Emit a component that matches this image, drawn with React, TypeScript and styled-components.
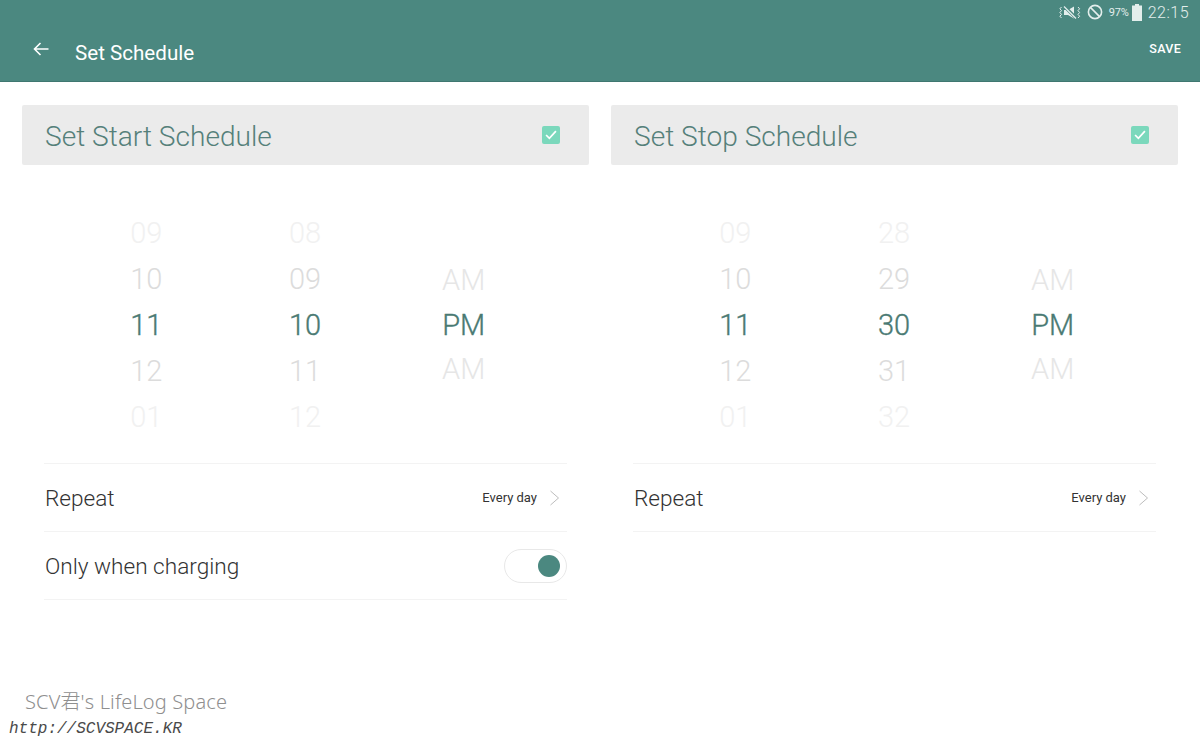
import React from "react"
import styled, { createGlobalStyle } from "styled-components"

const GlobalStyle = createGlobalStyle`
	html, body {
		margin: 0;
		padding: 0;
		background: #fff;
		font-family: Roboto, "Liberation Sans", sans-serif;
	}
`

const SPage = styled.div`
	position: relative;
	width: 1200px;
	height: 750px;
	overflow: hidden;
	background: #fff;
`

const SHeader = styled.header`
	display: flex;
	flex-direction: column;
	height: 81px;
	background: #4b8880;
	border-bottom: 1px solid #3f7770;
	box-sizing: content-box;
`

const SStatusBar = styled.div`
	display: flex;
	align-items: center;
	justify-content: flex-end;
	height: 24px;
	padding-right: 11px;
	color: #e3eeec;
`

const SBattery = styled.span`
	font-size: 11px;
	margin: 0 3px 0 6px;
	letter-spacing: -0.2px;
`

const SClock = styled.span`
	font-size: 16px;
	font-weight: 300;
	letter-spacing: 0.5px;
	margin-left: 6px;
`

const SAppBar = styled.div`
	display: flex;
	align-items: center;
	justify-content: space-between;
	height: 49px;
	padding: 0 19px 0 33px;
	color: #fff;
`

const STitleGroup = styled.div`
	display: flex;
	align-items: center;
	gap: 26px;
`

const STitle = styled.div`
	font-size: 20.6px;
	padding-top: 9px;
`

const SSave = styled.div`
	font-size: 12.5px;
	font-weight: 500;
	letter-spacing: 0.3px;
`

const SBackIcon = styled.svg`
	width: 16px;
	height: 16px;
	display: block;
`

const SColumns = styled.div`
	display: flex;
	gap: 22px;
	padding: 23px 22px 0;
`

const SPanel = styled.section`
	width: 567px;
`

const SPanelHead = styled.div`
	display: flex;
	align-items: center;
	justify-content: space-between;
	height: 60px;
	padding: 0 29px 0 23px;
	background: #ebebeb;
	border-radius: 2px;
`

const SPanelTitle = styled.div`
	font-size: 28.1px;
	font-weight: 300;
	color: #55807a;
	padding-top: 2px;
`

const SCheck = styled.div`
	display: flex;
	align-items: center;
	justify-content: center;
	width: 18px;
	height: 18px;
	background: #7bd8bc;
	border-radius: 2px;
`

const SPicker = styled.div`
	display: flex;
	padding: 45px 0 0 45px;
	height: 298px;
	box-sizing: border-box;
`

const SWheel = styled.div`
	display: flex;
	flex-direction: column;
	align-items: center;
	justify-content: center;
	width: 158.7px;
	height: 230px;
`

const SNumber = styled.div<{ $tone: number }>`
	height: ${(p) => (p.$tone === 3 ? 44.5 : 46)}px;
	line-height: ${(p) => (p.$tone === 3 ? 44.5 : 46)}px;
	font-size: 29px;
	color: ${(p) => (p.$tone === 0 ? "#4a7a73" : p.$tone === 1 ? "#dcdcdc" : p.$tone === 3 ? "#e6e6e6" : "#f1f1f1")};
	font-weight: 300;
	-webkit-text-stroke: ${(p) => (p.$tone === 0 ? "0.35px" : "0")};
`

const SAmPmActive = styled(SNumber)`
	height: 44.5px;
	line-height: 44.5px;
`

const SRow = styled.div`
	display: flex;
	align-items: center;
	justify-content: space-between;
	height: 67px;
	margin: 0 22px;
	border-top: 1px solid #f3f3f3;
	&:last-child {
		border-bottom: 1px solid #f3f3f3;
	}
`

const SRowLabel = styled.div`
	font-size: 22.6px;
	font-weight: 300;
	color: #333;
	padding: 1px 0 0 1px;
`

const SRowValue = styled.div`
	display: flex;
	align-items: center;
	gap: 12px;
	padding-right: 7px;
	font-size: 13px;
	color: #333;
`

const SToggle = styled.div`
	display: flex;
	align-items: center;
	justify-content: flex-end;
	width: 63px;
	height: 34px;
	padding-right: 6px;
	box-sizing: border-box;
	border: 1px solid #e8e8e8;
	border-radius: 17px;
`

const SKnob = styled.div`
	width: 22px;
	height: 22px;
	border-radius: 50%;
	background: #4b8880;
`

const SWatermark = styled.div`
	position: absolute;
	left: 25px;
	top: 686px;
	font-family: "Noto Sans", "Noto Sans CJK KR", sans-serif;
	font-size: 20px;
	font-weight: 300;
	letter-spacing: 0.15px;
	color: #8f8f8f;
`

const SWatermarkUrl = styled.div`
	position: absolute;
	left: 9px;
	top: 720px;
	font-family: "Liberation Mono", monospace;
	font-style: italic;
	font-size: 16px;
	color: #4a4a4a;
`

const Wheel = ({ items }: { items: string[] }) => (
	<SWheel>
		{items.map((t, i) => (
			<SNumber key={t + i} $tone={i === 2 ? 0 : Math.abs(i - 2) === 1 ? 1 : 2}>
				{t}
			</SNumber>
		))}
	</SWheel>
)

const AmPm = () => (
	<SWheel>
		<SNumber $tone={3}>AM</SNumber>
		<SAmPmActive $tone={0}>PM</SAmPmActive>
		<SNumber $tone={3}>AM</SNumber>
	</SWheel>
)

const Chevron = () => (
	<svg width="11" height="16" viewBox="0 0 11 16" fill="none" stroke="#bdbdbd" strokeWidth="1">
		<path d="M1.5 1 L9.5 8 L1.5 15" />
	</svg>
)

const MuteIcon = () => (
	<svg width="22" height="13" viewBox="0 0 22 13" fill="none" stroke="#e3eeec" strokeWidth="1">
		<path d="M5 4 h4 l6 -3.5 v12 l-6 -3.5 h-4 z" fill="#e3eeec" stroke="none" />
		<path d="M5 0 L17.5 12.5" stroke="#4b8880" strokeWidth="3.2" />
		<path d="M5 0.5 L17 12.5" strokeWidth="1.3" />
		<path d="M2.5 1 l-1.6 1.8 l1.6 1.8 l-1.6 1.9 l1.6 1.9 l-1.6 1.8 l1.6 1.8" />
		<path d="M19 1 l1.6 1.8 l-1.6 1.8 l1.6 1.9 l-1.6 1.9 l1.6 1.8 l-1.6 1.8" />
	</svg>
)

const BlockIcon = () => (
	<svg width="16" height="16" viewBox="0 0 16 16" fill="none" stroke="#e3eeec" strokeWidth="1.6" style={{ marginLeft: 6 }}>
		<circle cx="8" cy="8" r="6.6" />
		<path d="M3.4 3.4 L12.6 12.6" />
	</svg>
)

const BatteryIcon = () => (
	<svg width="10" height="17" viewBox="0 0 10 17">
		<path d="M3 0 h4 v1.5 h3 V17 H0 V1.5 h3 z" fill="#e3eeec" />
	</svg>
)

const SchedulePanel = ({
	title,
	minutes,
	charging,
}: {
	title: string
	minutes: string[]
	charging?: boolean
}) => (
	<SPanel>
		<SPanelHead>
			<SPanelTitle>{title}</SPanelTitle>
			<SCheck>
				<svg width="12" height="10" viewBox="0 0 11 9" fill="none" stroke="#fff" strokeWidth="1.6">
					<path d="M1 4.5 L4 7.5 L10 1" />
				</svg>
			</SCheck>
		</SPanelHead>
		<SPicker>
			<Wheel items={["09", "10", "11", "12", "01"]} />
			<Wheel items={minutes} />
			<AmPm />
		</SPicker>
		<SRow>
			<SRowLabel>Repeat</SRowLabel>
			<SRowValue>
				Every day
				<Chevron />
			</SRowValue>
		</SRow>
		{charging && (
			<SRow>
				<SRowLabel>Only when charging</SRowLabel>
				<SToggle>
					<SKnob />
				</SToggle>
			</SRow>
		)}
	</SPanel>
)

export default function App() {
	return (
		<SPage>
			<GlobalStyle />
			<SHeader>
				<SStatusBar>
					<MuteIcon />
					<BlockIcon />
					<SBattery>97%</SBattery>
					<BatteryIcon />
					<SClock>22:15</SClock>
				</SStatusBar>
				<SAppBar>
					<STitleGroup>
						<SBackIcon viewBox="0 0 16 16" fill="none" stroke="#fff" strokeWidth="1.6">
							<path d="M15.5 8 H1.5 M7.5 2 L1.5 8 L7.5 14" />
						</SBackIcon>
						<STitle>Set Schedule</STitle>
					</STitleGroup>
					<SSave>SAVE</SSave>
				</SAppBar>
			</SHeader>
			<SColumns>
				<SchedulePanel title="Set Start Schedule" minutes={["08", "09", "10", "11", "12"]} charging />
				<SchedulePanel title="Set Stop Schedule" minutes={["28", "29", "30", "31", "32"]} />
			</SColumns>
			<SWatermark>SCV君's LifeLog Space</SWatermark>
			<SWatermarkUrl>http://SCVSPACE.KR</SWatermarkUrl>
		</SPage>
	)
}
